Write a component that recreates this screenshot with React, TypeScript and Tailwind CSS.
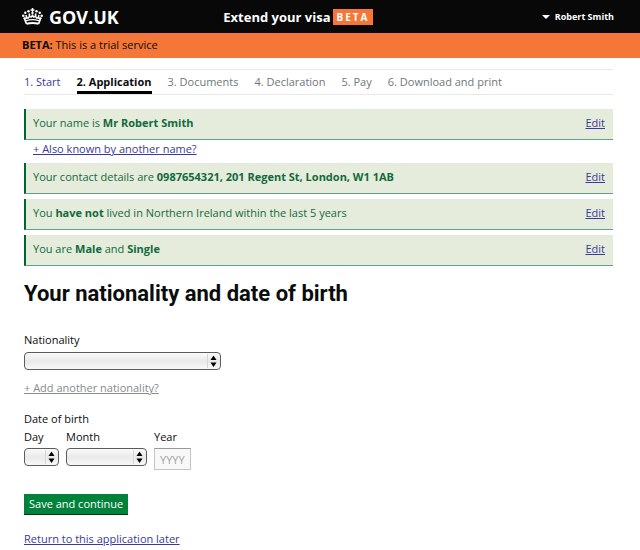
import type { ReactNode } from "react";

const steps = [
  "1. Start",
  "2. Application",
  "3. Documents",
  "4. Declaration",
  "5. Pay",
  "6. Download and print",
];

function Crown() {
  return (
    <svg viewBox="0 0 42 34" className="h-[17px] w-[21px]" fill="#fff" aria-hidden="true">
      <path d="M19.500 0H22.500V2.500H25V5.500H22.500V8H19.500V5.500H17V2.500H19.500Z" />
      <circle cx="21" cy="10" r="2.4" />
      <circle cx="13" cy="6.5" r="2.5" />
      <circle cx="29" cy="6.5" r="2.5" />
      <circle cx="6.6" cy="9.5" r="2.5" />
      <circle cx="35.4" cy="9.5" r="2.5" />
      <circle cx="2.6" cy="15.500" r="2.5" />
      <circle cx="39.4" cy="15.500" r="2.5" />
      <g fill="none" stroke="#fff">
        <path d="M4 19L9 32" strokeWidth="3.4" />
        <path d="M38 19L33 32" strokeWidth="3.4" />
        <path d="M4 20C8 23 10 20 8 14M14.500 11C16 20 12 22 9 18M14.500 11C15 20 20 20 21 13M27.500 11C27 20 22 20 21 13M27.500 11C26 20 30 22 33 18M38 20C34 23 32 20 34 14" strokeWidth="3.2" />
        <path d="M8 25.500C16 22.500 26 22.500 34 25.500" strokeWidth="2.6" />
        <path d="M9 31.500C17 29.500 25 29.500 33 31.500" strokeWidth="4" />
      </g>
    </svg>
  );
}

function Summary({ children, name }: { children: ReactNode; name: string }) {
  return (
    <div className="flex h-[31px] items-start justify-between border-b border-l-2 border-b-[#5fa583] border-l-[#006435] bg-[#e6ecdc] pt-[6px] pr-2 pl-[7px] text-[#106a3c]">
      <p>{children}</p>
      <a href="#edit" aria-label={"Edit " + name} className="text-[#3a3a9c] underline">
        Edit
      </a>
    </div>
  );
}

function Picker({ id, width }: { id: string; width: string }) {
  return (
    <div className={"relative h-[18px] " + width}>
      <select
        id={id}
        className="block h-full w-full appearance-none rounded-[4px] border border-[#5c5c5c] bg-linear-to-b from-[#fafafa] via-[#e9e9e9] to-[#f8f8f8]"
      >
        <option value=""></option>
      </select>
      <svg
        viewBox="0 0 14 16"
        className="pointer-events-none absolute top-px right-px h-4 w-[14px]"
        aria-hidden="true"
      >
        <path d="M1.500 1V15" stroke="#d4d4d4" />
        <path d="M4.500 7L7.500 2.500L10.500 7ZM4.500 9.500L7.500 14L10.500 9.500Z" fill="#000" />
      </svg>
    </div>
  );
}

export default function App() {
  return (
    <div className="min-h-screen bg-white font-['Open_Sans',sans-serif] text-[11px] leading-4 text-[#0b0c0c]">
      <header className="grid h-[33px] grid-cols-[34%_1fr_auto] items-center bg-[#080808] pr-[26px] pl-[22px] text-white">
        <a href="#home" className="flex items-center gap-[6px] text-[18px] leading-5 font-bold">
          <Crown />
          <span>GOV.UK</span>
        </a>
        <div className="flex items-center gap-[3px] text-[13px] font-bold">
          <span>Extend your visa</span>
          <span className="bg-[#f47738] px-[3px] text-[10px] leading-4 tracking-[2px]">BETA</span>
        </div>
        <button type="button" className="flex items-center gap-[5px] justify-self-end text-[9px] font-bold">
          <svg viewBox="0 0 8 4" className="h-1 w-2" fill="#fff" aria-hidden="true">
            <path d="M0 0H8L4 4Z" />
          </svg>
          Robert Smith
        </button>
      </header>
      <div className="flex h-[25px] items-center bg-[#f47738] px-[22px] pb-px">
        <p>
          <strong>BETA:</strong> This is a trial service
        </p>
      </div>
      <main className="pt-[11px] pr-[27px] pl-6">
        <nav aria-label="Progress">
          <ol className="flex h-[26px] gap-4 border-y border-[#e8e8e8] text-[#6f777b]">
            {steps.map((step, i) => (
              <li
                key={step}
                className={
                  i === 1
                    ? "border-b-3 border-black pt-1 font-bold text-[#0b0c0c]"
                    : i === 0
                      ? "pt-1 text-[#3a3a9c]"
                      : "pt-1"
                }
              >
                {i === 0 ? <a href="#start">{step}</a> : step}
              </li>
            ))}
          </ol>
        </nav>
        <section className="mt-[14px]" aria-label="Your answers">
          <Summary name="name">
            Your name is <strong>Mr Robert Smith</strong>
          </Summary>
          <p className="mb-[6px] ml-[9px] pt-px">
            <a href="#alias" className="text-[#3a3a9c] underline">
              + Also known by another name?
            </a>
          </p>
          <div className="flex flex-col gap-[5px]">
            <Summary name="contact details">
              Your contact details are <strong>0987654321, 201 Regent St, London, W1 1AB</strong>
            </Summary>
            <Summary name="residence">
              You <strong>have not</strong> lived in Northern Ireland within the last 5 years
            </Summary>
            <Summary name="sex and marital status">
              You are <strong>Male</strong> and <strong>Single</strong>
            </Summary>
          </div>
        </section>
        <form>
          <h1 className="mt-[14px] font-[Roboto,sans-serif] text-[22px] leading-7 font-bold">
            Your nationality and date of birth
          </h1>
          <label htmlFor="nationality" className="mt-6 mb-1 block">
            Nationality
          </label>
          <Picker id="nationality" width="w-[197px]" />
          <a href="#more" className="mt-[10px] block w-fit text-[#858b8e] underline">
            + Add another nationality?
          </a>
          <fieldset className="mt-[15px]">
            <legend>Date of birth</legend>
            <div className="mt-[2px] flex items-start gap-[7px]">
              <div>
                <label htmlFor="day" className="mb-[3px] block">Day</label>
                <Picker id="day" width="w-[35px]" />
              </div>
              <div>
                <label htmlFor="month" className="mb-[3px] block">Month</label>
                <Picker id="month" width="w-[81px]" />
              </div>
              <div>
                <label htmlFor="year" className="mb-[3px] block">Year</label>
                <input
                  id="year"
                  type="text"
                  placeholder="YYYY"
                  className="block h-[22px] w-[37px] border border-[#c4c4c4] border-t-[#999] bg-[#f8f8f8] pl-[5px] placeholder:text-[#a2a2a2]"
                />
              </div>
            </div>
          </fieldset>
          <button
            type="submit"
            className="mt-6 block h-[21px] border-b border-[#003618] bg-[#00823b] px-[5px] text-white"
          >
            Save and continue
          </button>
          <a href="#later" className="mt-4 block w-fit text-[#3a3a9c] underline">
            Return to this application later
          </a>
        </form>
      </main>
    </div>
  );
}
